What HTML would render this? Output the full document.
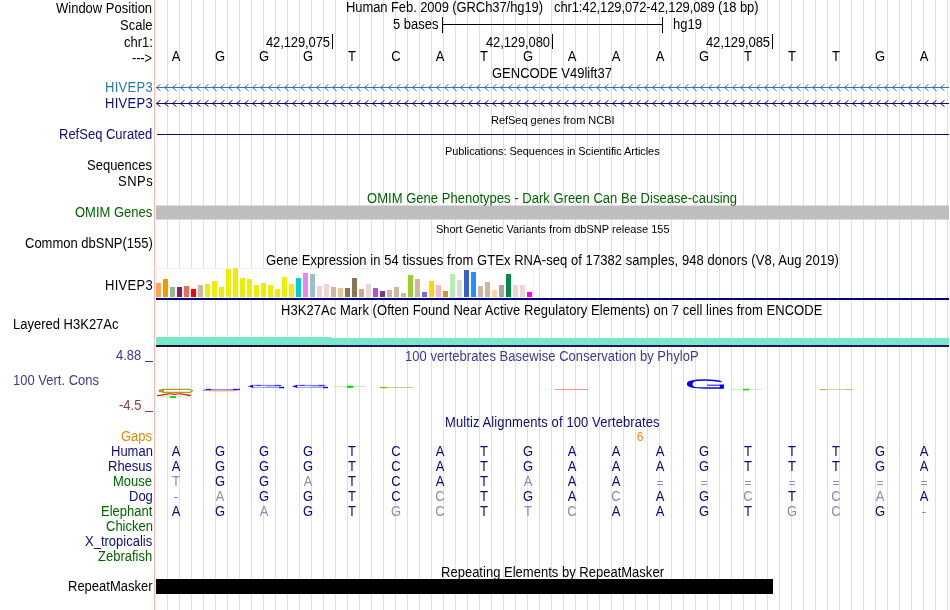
<!DOCTYPE html>
<html><head><meta charset="utf-8"><style>
html,body{margin:0;padding:0;background:#fff;}
#c{position:relative;width:950px;height:610px;overflow:hidden;background:#fff;font-family:"Liberation Sans",sans-serif;}
.t{position:absolute;white-space:pre;line-height:15px;transform:scaleY(1.07);will-change:transform;}
.r{position:absolute;}
</style></head><body><div id="c">
<div class="r" style="left:167px;top:0px;width:1px;height:610px;background:#dcdcff;"></div>
<div class="r" style="left:179px;top:0px;width:1px;height:610px;background:#dcdcff;"></div>
<div class="r" style="left:191px;top:0px;width:1px;height:610px;background:#dcdcff;"></div>
<div class="r" style="left:203px;top:0px;width:1px;height:610px;background:#dcdcff;"></div>
<div class="r" style="left:215px;top:0px;width:1px;height:610px;background:#dcdcff;"></div>
<div class="r" style="left:227px;top:0px;width:1px;height:610px;background:#dcdcff;"></div>
<div class="r" style="left:239px;top:0px;width:1px;height:610px;background:#dcdcff;"></div>
<div class="r" style="left:251px;top:0px;width:1px;height:610px;background:#dcdcff;"></div>
<div class="r" style="left:263px;top:0px;width:1px;height:610px;background:#dcdcff;"></div>
<div class="r" style="left:275px;top:0px;width:1px;height:610px;background:#dcdcff;"></div>
<div class="r" style="left:287px;top:0px;width:1px;height:610px;background:#dcdcff;"></div>
<div class="r" style="left:299px;top:0px;width:1px;height:610px;background:#dcdcff;"></div>
<div class="r" style="left:311px;top:0px;width:1px;height:610px;background:#dcdcff;"></div>
<div class="r" style="left:323px;top:0px;width:1px;height:610px;background:#dcdcff;"></div>
<div class="r" style="left:335px;top:0px;width:1px;height:610px;background:#dcdcff;"></div>
<div class="r" style="left:347px;top:0px;width:1px;height:610px;background:#dcdcff;"></div>
<div class="r" style="left:359px;top:0px;width:1px;height:610px;background:#dcdcff;"></div>
<div class="r" style="left:371px;top:0px;width:1px;height:610px;background:#dcdcff;"></div>
<div class="r" style="left:383px;top:0px;width:1px;height:610px;background:#dcdcff;"></div>
<div class="r" style="left:395px;top:0px;width:1px;height:610px;background:#dcdcff;"></div>
<div class="r" style="left:407px;top:0px;width:1px;height:610px;background:#dcdcff;"></div>
<div class="r" style="left:419px;top:0px;width:1px;height:610px;background:#dcdcff;"></div>
<div class="r" style="left:431px;top:0px;width:1px;height:610px;background:#dcdcff;"></div>
<div class="r" style="left:443px;top:0px;width:1px;height:610px;background:#dcdcff;"></div>
<div class="r" style="left:455px;top:0px;width:1px;height:610px;background:#dcdcff;"></div>
<div class="r" style="left:467px;top:0px;width:1px;height:610px;background:#dcdcff;"></div>
<div class="r" style="left:479px;top:0px;width:1px;height:610px;background:#dcdcff;"></div>
<div class="r" style="left:491px;top:0px;width:1px;height:610px;background:#dcdcff;"></div>
<div class="r" style="left:503px;top:0px;width:1px;height:610px;background:#dcdcff;"></div>
<div class="r" style="left:515px;top:0px;width:1px;height:610px;background:#dcdcff;"></div>
<div class="r" style="left:527px;top:0px;width:1px;height:610px;background:#dcdcff;"></div>
<div class="r" style="left:539px;top:0px;width:1px;height:610px;background:#dcdcff;"></div>
<div class="r" style="left:551px;top:0px;width:1px;height:610px;background:#dcdcff;"></div>
<div class="r" style="left:563px;top:0px;width:1px;height:610px;background:#dcdcff;"></div>
<div class="r" style="left:575px;top:0px;width:1px;height:610px;background:#dcdcff;"></div>
<div class="r" style="left:587px;top:0px;width:1px;height:610px;background:#dcdcff;"></div>
<div class="r" style="left:599px;top:0px;width:1px;height:610px;background:#dcdcff;"></div>
<div class="r" style="left:611px;top:0px;width:1px;height:610px;background:#dcdcff;"></div>
<div class="r" style="left:623px;top:0px;width:1px;height:610px;background:#dcdcff;"></div>
<div class="r" style="left:635px;top:0px;width:1px;height:610px;background:#dcdcff;"></div>
<div class="r" style="left:647px;top:0px;width:1px;height:610px;background:#dcdcff;"></div>
<div class="r" style="left:659px;top:0px;width:1px;height:610px;background:#dcdcff;"></div>
<div class="r" style="left:671px;top:0px;width:1px;height:610px;background:#dcdcff;"></div>
<div class="r" style="left:683px;top:0px;width:1px;height:610px;background:#dcdcff;"></div>
<div class="r" style="left:695px;top:0px;width:1px;height:610px;background:#dcdcff;"></div>
<div class="r" style="left:707px;top:0px;width:1px;height:610px;background:#dcdcff;"></div>
<div class="r" style="left:719px;top:0px;width:1px;height:610px;background:#dcdcff;"></div>
<div class="r" style="left:731px;top:0px;width:1px;height:610px;background:#dcdcff;"></div>
<div class="r" style="left:743px;top:0px;width:1px;height:610px;background:#dcdcff;"></div>
<div class="r" style="left:755px;top:0px;width:1px;height:610px;background:#dcdcff;"></div>
<div class="r" style="left:767px;top:0px;width:1px;height:610px;background:#dcdcff;"></div>
<div class="r" style="left:779px;top:0px;width:1px;height:610px;background:#dcdcff;"></div>
<div class="r" style="left:791px;top:0px;width:1px;height:610px;background:#dcdcff;"></div>
<div class="r" style="left:803px;top:0px;width:1px;height:610px;background:#dcdcff;"></div>
<div class="r" style="left:815px;top:0px;width:1px;height:610px;background:#dcdcff;"></div>
<div class="r" style="left:827px;top:0px;width:1px;height:610px;background:#dcdcff;"></div>
<div class="r" style="left:839px;top:0px;width:1px;height:610px;background:#dcdcff;"></div>
<div class="r" style="left:851px;top:0px;width:1px;height:610px;background:#dcdcff;"></div>
<div class="r" style="left:863px;top:0px;width:1px;height:610px;background:#dcdcff;"></div>
<div class="r" style="left:875px;top:0px;width:1px;height:610px;background:#dcdcff;"></div>
<div class="r" style="left:887px;top:0px;width:1px;height:610px;background:#dcdcff;"></div>
<div class="r" style="left:899px;top:0px;width:1px;height:610px;background:#dcdcff;"></div>
<div class="r" style="left:911px;top:0px;width:1px;height:610px;background:#dcdcff;"></div>
<div class="r" style="left:923px;top:0px;width:1px;height:610px;background:#dcdcff;"></div>
<div class="r" style="left:935px;top:0px;width:1px;height:610px;background:#dcdcff;"></div>
<div class="r" style="left:947px;top:0px;width:1px;height:610px;background:#dcdcff;"></div>
<div class="r" style="left:154px;top:0px;width:1px;height:610px;background:#ffb4b4;"></div>
<div class="t" style="right:797.5px;top:1.0px;font-size:13px;color:#000;transform-origin:0 12.0px;">Window Position</div>
<div class="t" style="right:797.5px;top:18.0px;font-size:13px;color:#000;transform-origin:0 12.0px;">Scale</div>
<div class="t" style="right:797.5px;top:35.0px;font-size:13px;color:#000;transform-origin:0 12.0px;">chr1:</div>
<div class="t" style="right:798.3px;top:51.0px;font-size:13px;color:#000;transform-origin:0 12.0px;letter-spacing:-0.2px;">---&gt;</div>
<div class="t" style="right:797.2px;top:80.0px;font-size:13px;color:#2676b6;transform-origin:0 12.0px;letter-spacing:0.3px;">HIVEP3</div>
<div class="t" style="right:797.2px;top:96.0px;font-size:13px;color:#0c0c78;transform-origin:0 12.0px;letter-spacing:0.3px;">HIVEP3</div>
<div class="t" style="right:797.5px;top:127.0px;font-size:13px;color:#0c0c78;transform-origin:0 12.0px;">RefSeq Curated</div>
<div class="t" style="right:797.5px;top:158.0px;font-size:13px;color:#000;transform-origin:0 12.0px;">Sequences</div>
<div class="t" style="right:797.0px;top:174.0px;font-size:13px;color:#000;transform-origin:0 12.0px;letter-spacing:0.5px;">SNPs</div>
<div class="t" style="right:797.5px;top:205.0px;font-size:13px;color:#006400;transform-origin:0 12.0px;">OMIM Genes</div>
<div class="t" style="right:797.5px;top:236.0px;font-size:13px;color:#000;transform-origin:0 12.0px;">Common dbSNP(155)</div>
<div class="t" style="right:797.2px;top:278.0px;font-size:13px;color:#000;transform-origin:0 12.0px;letter-spacing:0.3px;">HIVEP3</div>
<div class="t" style="left:13px;top:317.0px;font-size:13px;color:#000;transform-origin:0 12.0px;">Layered H3K27Ac</div>
<div class="t" style="right:809px;top:348.0px;font-size:13px;color:#3c3c8c;transform-origin:0 12.0px;">4.88</div>
<div class="r" style="left:145px;top:361px;width:8px;height:1px;background:#3c3c8c;"></div>
<div class="t" style="left:13px;top:373.0px;font-size:13px;color:#3c3c8c;transform-origin:0 12.0px;">100 Vert. Cons</div>
<div class="t" style="right:809px;top:398.0px;font-size:13px;color:#8c3c3c;transform-origin:0 12.0px;">-4.5</div>
<div class="r" style="left:145px;top:411px;width:8px;height:1px;background:#8c3c3c;"></div>
<div class="t" style="right:797.5px;top:429.0px;font-size:13px;color:#e88a00;transform-origin:0 12.0px;">Gaps</div>
<div class="t" style="right:797.5px;top:444.0px;font-size:13px;color:#0c0c78;transform-origin:0 12.0px;">Human</div>
<div class="t" style="right:797.5px;top:459.0px;font-size:13px;color:#0c0c78;transform-origin:0 12.0px;">Rhesus</div>
<div class="t" style="right:797.5px;top:474.0px;font-size:13px;color:#006400;transform-origin:0 12.0px;">Mouse</div>
<div class="t" style="right:797.5px;top:489.0px;font-size:13px;color:#0c0c78;transform-origin:0 12.0px;">Dog</div>
<div class="t" style="right:797.5px;top:504.0px;font-size:13px;color:#006400;transform-origin:0 12.0px;">Elephant</div>
<div class="t" style="right:797.5px;top:519.0px;font-size:13px;color:#006400;transform-origin:0 12.0px;">Chicken</div>
<div class="t" style="right:797.5px;top:534.0px;font-size:13px;color:#0c0c78;transform-origin:0 12.0px;">X_tropicalis</div>
<div class="t" style="right:797.5px;top:549.0px;font-size:13px;color:#006400;transform-origin:0 12.0px;">Zebrafish</div>
<div class="t" style="right:797.5px;top:579.0px;font-size:13px;color:#000;transform-origin:0 12.0px;">RepeatMasker</div>
<div class="t" style="left:345.6px;top:0.0px;font-size:13px;color:#000;transform-origin:0 12.0px;letter-spacing:-0.086px;">Human Feb. 2009 (GRCh37/hg19)</div>
<div class="t" style="left:554.1px;top:0.0px;font-size:13px;color:#000;transform-origin:0 12.0px;letter-spacing:-0.109px;">chr1:42,129,072-42,129,089 (18 bp)</div>
<div class="t" style="left:393px;top:17.0px;font-size:13px;color:#000;transform-origin:0 12.0px;">5 bases</div>
<div class="r" style="left:442px;top:17px;width:1px;height:16px;background:#000;"></div>
<div class="r" style="left:662px;top:17px;width:1px;height:16px;background:#000;"></div>
<div class="r" style="left:442px;top:24px;width:221px;height:1px;background:#000;"></div>
<div class="t" style="left:673px;top:17.0px;font-size:13px;color:#000;transform-origin:0 12.0px;">hg19</div>
<div class="t" style="right:620px;top:35.0px;font-size:13px;color:#000;transform-origin:0 12.0px;letter-spacing:-0.12px;">42,129,075</div>
<div class="r" style="left:332px;top:34px;width:1px;height:15px;background:#000;"></div>
<div class="t" style="right:400px;top:35.0px;font-size:13px;color:#000;transform-origin:0 12.0px;letter-spacing:-0.12px;">42,129,080</div>
<div class="r" style="left:552px;top:34px;width:1px;height:15px;background:#000;"></div>
<div class="t" style="right:180px;top:35.0px;font-size:13px;color:#000;transform-origin:0 12.0px;letter-spacing:-0.12px;">42,129,085</div>
<div class="r" style="left:772px;top:34px;width:1px;height:15px;background:#000;"></div>
<div class="t" style="left:-224px;width:800px;text-align:center;top:49.0px;font-size:13px;color:#000;transform-origin:0 12.0px;">A</div>
<div class="t" style="left:-180px;width:800px;text-align:center;top:49.0px;font-size:13px;color:#000;transform-origin:0 12.0px;">G</div>
<div class="t" style="left:-136px;width:800px;text-align:center;top:49.0px;font-size:13px;color:#000;transform-origin:0 12.0px;">G</div>
<div class="t" style="left:-92px;width:800px;text-align:center;top:49.0px;font-size:13px;color:#000;transform-origin:0 12.0px;">G</div>
<div class="t" style="left:-48px;width:800px;text-align:center;top:49.0px;font-size:13px;color:#000;transform-origin:0 12.0px;">T</div>
<div class="t" style="left:-4px;width:800px;text-align:center;top:49.0px;font-size:13px;color:#000;transform-origin:0 12.0px;">C</div>
<div class="t" style="left:40px;width:800px;text-align:center;top:49.0px;font-size:13px;color:#000;transform-origin:0 12.0px;">A</div>
<div class="t" style="left:84px;width:800px;text-align:center;top:49.0px;font-size:13px;color:#000;transform-origin:0 12.0px;">T</div>
<div class="t" style="left:128px;width:800px;text-align:center;top:49.0px;font-size:13px;color:#000;transform-origin:0 12.0px;">G</div>
<div class="t" style="left:172px;width:800px;text-align:center;top:49.0px;font-size:13px;color:#000;transform-origin:0 12.0px;">A</div>
<div class="t" style="left:216px;width:800px;text-align:center;top:49.0px;font-size:13px;color:#000;transform-origin:0 12.0px;">A</div>
<div class="t" style="left:260px;width:800px;text-align:center;top:49.0px;font-size:13px;color:#000;transform-origin:0 12.0px;">A</div>
<div class="t" style="left:304px;width:800px;text-align:center;top:49.0px;font-size:13px;color:#000;transform-origin:0 12.0px;">G</div>
<div class="t" style="left:348px;width:800px;text-align:center;top:49.0px;font-size:13px;color:#000;transform-origin:0 12.0px;">T</div>
<div class="t" style="left:392px;width:800px;text-align:center;top:49.0px;font-size:13px;color:#000;transform-origin:0 12.0px;">T</div>
<div class="t" style="left:436px;width:800px;text-align:center;top:49.0px;font-size:13px;color:#000;transform-origin:0 12.0px;">T</div>
<div class="t" style="left:480px;width:800px;text-align:center;top:49.0px;font-size:13px;color:#000;transform-origin:0 12.0px;">G</div>
<div class="t" style="left:524px;width:800px;text-align:center;top:49.0px;font-size:13px;color:#000;transform-origin:0 12.0px;">A</div>
<div class="t" style="left:491.5px;top:66.0px;font-size:13px;color:#000;transform-origin:0 12.0px;letter-spacing:0.0px;">GENCODE V49lift37</div>
<div class="t" style="left:490.8px;top:113.0px;font-size:11px;color:#000;transform-origin:0 10.0px;letter-spacing:-0.029px;">RefSeq genes from NCBI</div>
<div class="t" style="left:444.5px;top:144.0px;font-size:11px;color:#000;transform-origin:0 10.0px;letter-spacing:-0.067px;">Publications: Sequences in Scientific Articles</div>
<div class="t" style="left:367.4px;top:191.0px;font-size:13px;color:#006400;transform-origin:0 12.0px;letter-spacing:0.029px;">OMIM Gene Phenotypes - Dark Green Can Be Disease-causing</div>
<div class="t" style="left:435.6px;top:222.0px;font-size:11px;color:#000;transform-origin:0 10.0px;letter-spacing:0.009px;">Short Genetic Variants from dbSNP release 155</div>
<div class="t" style="left:265.6px;top:253.0px;font-size:13px;color:#000;transform-origin:0 12.0px;letter-spacing:0.062px;">Gene Expression in 54 tissues from GTEx RNA-seq of 17382 samples, 948 donors (V8, Aug 2019)</div>
<div class="t" style="left:280.8px;top:303.0px;font-size:13px;color:#000;transform-origin:0 12.0px;letter-spacing:0.045px;">H3K27Ac Mark (Often Found Near Active Regulatory Elements) on 7 cell lines from ENCODE</div>
<div class="t" style="left:404.7px;top:349.0px;font-size:13px;color:#3c3c8c;transform-origin:0 12.0px;letter-spacing:0.039px;">100 vertebrates Basewise Conservation by PhyloP</div>
<div class="t" style="left:444.5px;top:415.0px;font-size:13px;color:#0c0c78;transform-origin:0 12.0px;letter-spacing:0.103px;">Multiz Alignments of 100 Vertebrates</div>
<div class="t" style="left:440.8px;top:565.0px;font-size:13px;color:#000;transform-origin:0 12.0px;letter-spacing:0.012px;">Repeating Elements by RepeatMasker</div>
<div class="r" style="left:156px;top:87px;width:793px;height:1px;background:#2676b6;"></div>
<svg class="r" style="left:0;top:83px" width="949" height="9"><polyline points="160.5,1.3 156.5,4.5 160.5,7.7" fill="none" stroke="#2676b6" stroke-width="1"/><polyline points="168.5,1.3 164.5,4.5 168.5,7.7" fill="none" stroke="#2676b6" stroke-width="1"/><polyline points="176.5,1.3 172.5,4.5 176.5,7.7" fill="none" stroke="#2676b6" stroke-width="1"/><polyline points="184.5,1.3 180.5,4.5 184.5,7.7" fill="none" stroke="#2676b6" stroke-width="1"/><polyline points="192.5,1.3 188.5,4.5 192.5,7.7" fill="none" stroke="#2676b6" stroke-width="1"/><polyline points="200.5,1.3 196.5,4.5 200.5,7.7" fill="none" stroke="#2676b6" stroke-width="1"/><polyline points="208.5,1.3 204.5,4.5 208.5,7.7" fill="none" stroke="#2676b6" stroke-width="1"/><polyline points="216.5,1.3 212.5,4.5 216.5,7.7" fill="none" stroke="#2676b6" stroke-width="1"/><polyline points="224.5,1.3 220.5,4.5 224.5,7.7" fill="none" stroke="#2676b6" stroke-width="1"/><polyline points="232.5,1.3 228.5,4.5 232.5,7.7" fill="none" stroke="#2676b6" stroke-width="1"/><polyline points="240.5,1.3 236.5,4.5 240.5,7.7" fill="none" stroke="#2676b6" stroke-width="1"/><polyline points="248.5,1.3 244.5,4.5 248.5,7.7" fill="none" stroke="#2676b6" stroke-width="1"/><polyline points="256.5,1.3 252.5,4.5 256.5,7.7" fill="none" stroke="#2676b6" stroke-width="1"/><polyline points="264.5,1.3 260.5,4.5 264.5,7.7" fill="none" stroke="#2676b6" stroke-width="1"/><polyline points="272.5,1.3 268.5,4.5 272.5,7.7" fill="none" stroke="#2676b6" stroke-width="1"/><polyline points="280.5,1.3 276.5,4.5 280.5,7.7" fill="none" stroke="#2676b6" stroke-width="1"/><polyline points="288.5,1.3 284.5,4.5 288.5,7.7" fill="none" stroke="#2676b6" stroke-width="1"/><polyline points="296.5,1.3 292.5,4.5 296.5,7.7" fill="none" stroke="#2676b6" stroke-width="1"/><polyline points="304.5,1.3 300.5,4.5 304.5,7.7" fill="none" stroke="#2676b6" stroke-width="1"/><polyline points="312.5,1.3 308.5,4.5 312.5,7.7" fill="none" stroke="#2676b6" stroke-width="1"/><polyline points="320.5,1.3 316.5,4.5 320.5,7.7" fill="none" stroke="#2676b6" stroke-width="1"/><polyline points="328.5,1.3 324.5,4.5 328.5,7.7" fill="none" stroke="#2676b6" stroke-width="1"/><polyline points="336.5,1.3 332.5,4.5 336.5,7.7" fill="none" stroke="#2676b6" stroke-width="1"/><polyline points="344.5,1.3 340.5,4.5 344.5,7.7" fill="none" stroke="#2676b6" stroke-width="1"/><polyline points="352.5,1.3 348.5,4.5 352.5,7.7" fill="none" stroke="#2676b6" stroke-width="1"/><polyline points="360.5,1.3 356.5,4.5 360.5,7.7" fill="none" stroke="#2676b6" stroke-width="1"/><polyline points="368.5,1.3 364.5,4.5 368.5,7.7" fill="none" stroke="#2676b6" stroke-width="1"/><polyline points="376.5,1.3 372.5,4.5 376.5,7.7" fill="none" stroke="#2676b6" stroke-width="1"/><polyline points="384.5,1.3 380.5,4.5 384.5,7.7" fill="none" stroke="#2676b6" stroke-width="1"/><polyline points="392.5,1.3 388.5,4.5 392.5,7.7" fill="none" stroke="#2676b6" stroke-width="1"/><polyline points="400.5,1.3 396.5,4.5 400.5,7.7" fill="none" stroke="#2676b6" stroke-width="1"/><polyline points="408.5,1.3 404.5,4.5 408.5,7.7" fill="none" stroke="#2676b6" stroke-width="1"/><polyline points="416.5,1.3 412.5,4.5 416.5,7.7" fill="none" stroke="#2676b6" stroke-width="1"/><polyline points="424.5,1.3 420.5,4.5 424.5,7.7" fill="none" stroke="#2676b6" stroke-width="1"/><polyline points="432.5,1.3 428.5,4.5 432.5,7.7" fill="none" stroke="#2676b6" stroke-width="1"/><polyline points="440.5,1.3 436.5,4.5 440.5,7.7" fill="none" stroke="#2676b6" stroke-width="1"/><polyline points="448.5,1.3 444.5,4.5 448.5,7.7" fill="none" stroke="#2676b6" stroke-width="1"/><polyline points="456.5,1.3 452.5,4.5 456.5,7.7" fill="none" stroke="#2676b6" stroke-width="1"/><polyline points="464.5,1.3 460.5,4.5 464.5,7.7" fill="none" stroke="#2676b6" stroke-width="1"/><polyline points="472.5,1.3 468.5,4.5 472.5,7.7" fill="none" stroke="#2676b6" stroke-width="1"/><polyline points="480.5,1.3 476.5,4.5 480.5,7.7" fill="none" stroke="#2676b6" stroke-width="1"/><polyline points="488.5,1.3 484.5,4.5 488.5,7.7" fill="none" stroke="#2676b6" stroke-width="1"/><polyline points="496.5,1.3 492.5,4.5 496.5,7.7" fill="none" stroke="#2676b6" stroke-width="1"/><polyline points="504.5,1.3 500.5,4.5 504.5,7.7" fill="none" stroke="#2676b6" stroke-width="1"/><polyline points="512.5,1.3 508.5,4.5 512.5,7.7" fill="none" stroke="#2676b6" stroke-width="1"/><polyline points="520.5,1.3 516.5,4.5 520.5,7.7" fill="none" stroke="#2676b6" stroke-width="1"/><polyline points="528.5,1.3 524.5,4.5 528.5,7.7" fill="none" stroke="#2676b6" stroke-width="1"/><polyline points="536.5,1.3 532.5,4.5 536.5,7.7" fill="none" stroke="#2676b6" stroke-width="1"/><polyline points="544.5,1.3 540.5,4.5 544.5,7.7" fill="none" stroke="#2676b6" stroke-width="1"/><polyline points="552.5,1.3 548.5,4.5 552.5,7.7" fill="none" stroke="#2676b6" stroke-width="1"/><polyline points="560.5,1.3 556.5,4.5 560.5,7.7" fill="none" stroke="#2676b6" stroke-width="1"/><polyline points="568.5,1.3 564.5,4.5 568.5,7.7" fill="none" stroke="#2676b6" stroke-width="1"/><polyline points="576.5,1.3 572.5,4.5 576.5,7.7" fill="none" stroke="#2676b6" stroke-width="1"/><polyline points="584.5,1.3 580.5,4.5 584.5,7.7" fill="none" stroke="#2676b6" stroke-width="1"/><polyline points="592.5,1.3 588.5,4.5 592.5,7.7" fill="none" stroke="#2676b6" stroke-width="1"/><polyline points="600.5,1.3 596.5,4.5 600.5,7.7" fill="none" stroke="#2676b6" stroke-width="1"/><polyline points="608.5,1.3 604.5,4.5 608.5,7.7" fill="none" stroke="#2676b6" stroke-width="1"/><polyline points="616.5,1.3 612.5,4.5 616.5,7.7" fill="none" stroke="#2676b6" stroke-width="1"/><polyline points="624.5,1.3 620.5,4.5 624.5,7.7" fill="none" stroke="#2676b6" stroke-width="1"/><polyline points="632.5,1.3 628.5,4.5 632.5,7.7" fill="none" stroke="#2676b6" stroke-width="1"/><polyline points="640.5,1.3 636.5,4.5 640.5,7.7" fill="none" stroke="#2676b6" stroke-width="1"/><polyline points="648.5,1.3 644.5,4.5 648.5,7.7" fill="none" stroke="#2676b6" stroke-width="1"/><polyline points="656.5,1.3 652.5,4.5 656.5,7.7" fill="none" stroke="#2676b6" stroke-width="1"/><polyline points="664.5,1.3 660.5,4.5 664.5,7.7" fill="none" stroke="#2676b6" stroke-width="1"/><polyline points="672.5,1.3 668.5,4.5 672.5,7.7" fill="none" stroke="#2676b6" stroke-width="1"/><polyline points="680.5,1.3 676.5,4.5 680.5,7.7" fill="none" stroke="#2676b6" stroke-width="1"/><polyline points="688.5,1.3 684.5,4.5 688.5,7.7" fill="none" stroke="#2676b6" stroke-width="1"/><polyline points="696.5,1.3 692.5,4.5 696.5,7.7" fill="none" stroke="#2676b6" stroke-width="1"/><polyline points="704.5,1.3 700.5,4.5 704.5,7.7" fill="none" stroke="#2676b6" stroke-width="1"/><polyline points="712.5,1.3 708.5,4.5 712.5,7.7" fill="none" stroke="#2676b6" stroke-width="1"/><polyline points="720.5,1.3 716.5,4.5 720.5,7.7" fill="none" stroke="#2676b6" stroke-width="1"/><polyline points="728.5,1.3 724.5,4.5 728.5,7.7" fill="none" stroke="#2676b6" stroke-width="1"/><polyline points="736.5,1.3 732.5,4.5 736.5,7.7" fill="none" stroke="#2676b6" stroke-width="1"/><polyline points="744.5,1.3 740.5,4.5 744.5,7.7" fill="none" stroke="#2676b6" stroke-width="1"/><polyline points="752.5,1.3 748.5,4.5 752.5,7.7" fill="none" stroke="#2676b6" stroke-width="1"/><polyline points="760.5,1.3 756.5,4.5 760.5,7.7" fill="none" stroke="#2676b6" stroke-width="1"/><polyline points="768.5,1.3 764.5,4.5 768.5,7.7" fill="none" stroke="#2676b6" stroke-width="1"/><polyline points="776.5,1.3 772.5,4.5 776.5,7.7" fill="none" stroke="#2676b6" stroke-width="1"/><polyline points="784.5,1.3 780.5,4.5 784.5,7.7" fill="none" stroke="#2676b6" stroke-width="1"/><polyline points="792.5,1.3 788.5,4.5 792.5,7.7" fill="none" stroke="#2676b6" stroke-width="1"/><polyline points="800.5,1.3 796.5,4.5 800.5,7.7" fill="none" stroke="#2676b6" stroke-width="1"/><polyline points="808.5,1.3 804.5,4.5 808.5,7.7" fill="none" stroke="#2676b6" stroke-width="1"/><polyline points="816.5,1.3 812.5,4.5 816.5,7.7" fill="none" stroke="#2676b6" stroke-width="1"/><polyline points="824.5,1.3 820.5,4.5 824.5,7.7" fill="none" stroke="#2676b6" stroke-width="1"/><polyline points="832.5,1.3 828.5,4.5 832.5,7.7" fill="none" stroke="#2676b6" stroke-width="1"/><polyline points="840.5,1.3 836.5,4.5 840.5,7.7" fill="none" stroke="#2676b6" stroke-width="1"/><polyline points="848.5,1.3 844.5,4.5 848.5,7.7" fill="none" stroke="#2676b6" stroke-width="1"/><polyline points="856.5,1.3 852.5,4.5 856.5,7.7" fill="none" stroke="#2676b6" stroke-width="1"/><polyline points="864.5,1.3 860.5,4.5 864.5,7.7" fill="none" stroke="#2676b6" stroke-width="1"/><polyline points="872.5,1.3 868.5,4.5 872.5,7.7" fill="none" stroke="#2676b6" stroke-width="1"/><polyline points="880.5,1.3 876.5,4.5 880.5,7.7" fill="none" stroke="#2676b6" stroke-width="1"/><polyline points="888.5,1.3 884.5,4.5 888.5,7.7" fill="none" stroke="#2676b6" stroke-width="1"/><polyline points="896.5,1.3 892.5,4.5 896.5,7.7" fill="none" stroke="#2676b6" stroke-width="1"/><polyline points="904.5,1.3 900.5,4.5 904.5,7.7" fill="none" stroke="#2676b6" stroke-width="1"/><polyline points="912.5,1.3 908.5,4.5 912.5,7.7" fill="none" stroke="#2676b6" stroke-width="1"/><polyline points="920.5,1.3 916.5,4.5 920.5,7.7" fill="none" stroke="#2676b6" stroke-width="1"/><polyline points="928.5,1.3 924.5,4.5 928.5,7.7" fill="none" stroke="#2676b6" stroke-width="1"/><polyline points="936.5,1.3 932.5,4.5 936.5,7.7" fill="none" stroke="#2676b6" stroke-width="1"/><polyline points="944.5,1.3 940.5,4.5 944.5,7.7" fill="none" stroke="#2676b6" stroke-width="1"/><polyline points="952.5,1.3 948.5,4.5 952.5,7.7" fill="none" stroke="#2676b6" stroke-width="1"/></svg>
<div class="r" style="left:156px;top:103px;width:793px;height:1px;background:#0c0c78;"></div>
<svg class="r" style="left:0;top:99px" width="949" height="9"><polyline points="160.5,1.3 156.5,4.5 160.5,7.7" fill="none" stroke="#0c0c78" stroke-width="1"/><polyline points="168.5,1.3 164.5,4.5 168.5,7.7" fill="none" stroke="#0c0c78" stroke-width="1"/><polyline points="176.5,1.3 172.5,4.5 176.5,7.7" fill="none" stroke="#0c0c78" stroke-width="1"/><polyline points="184.5,1.3 180.5,4.5 184.5,7.7" fill="none" stroke="#0c0c78" stroke-width="1"/><polyline points="192.5,1.3 188.5,4.5 192.5,7.7" fill="none" stroke="#0c0c78" stroke-width="1"/><polyline points="200.5,1.3 196.5,4.5 200.5,7.7" fill="none" stroke="#0c0c78" stroke-width="1"/><polyline points="208.5,1.3 204.5,4.5 208.5,7.7" fill="none" stroke="#0c0c78" stroke-width="1"/><polyline points="216.5,1.3 212.5,4.5 216.5,7.7" fill="none" stroke="#0c0c78" stroke-width="1"/><polyline points="224.5,1.3 220.5,4.5 224.5,7.7" fill="none" stroke="#0c0c78" stroke-width="1"/><polyline points="232.5,1.3 228.5,4.5 232.5,7.7" fill="none" stroke="#0c0c78" stroke-width="1"/><polyline points="240.5,1.3 236.5,4.5 240.5,7.7" fill="none" stroke="#0c0c78" stroke-width="1"/><polyline points="248.5,1.3 244.5,4.5 248.5,7.7" fill="none" stroke="#0c0c78" stroke-width="1"/><polyline points="256.5,1.3 252.5,4.5 256.5,7.7" fill="none" stroke="#0c0c78" stroke-width="1"/><polyline points="264.5,1.3 260.5,4.5 264.5,7.7" fill="none" stroke="#0c0c78" stroke-width="1"/><polyline points="272.5,1.3 268.5,4.5 272.5,7.7" fill="none" stroke="#0c0c78" stroke-width="1"/><polyline points="280.5,1.3 276.5,4.5 280.5,7.7" fill="none" stroke="#0c0c78" stroke-width="1"/><polyline points="288.5,1.3 284.5,4.5 288.5,7.7" fill="none" stroke="#0c0c78" stroke-width="1"/><polyline points="296.5,1.3 292.5,4.5 296.5,7.7" fill="none" stroke="#0c0c78" stroke-width="1"/><polyline points="304.5,1.3 300.5,4.5 304.5,7.7" fill="none" stroke="#0c0c78" stroke-width="1"/><polyline points="312.5,1.3 308.5,4.5 312.5,7.7" fill="none" stroke="#0c0c78" stroke-width="1"/><polyline points="320.5,1.3 316.5,4.5 320.5,7.7" fill="none" stroke="#0c0c78" stroke-width="1"/><polyline points="328.5,1.3 324.5,4.5 328.5,7.7" fill="none" stroke="#0c0c78" stroke-width="1"/><polyline points="336.5,1.3 332.5,4.5 336.5,7.7" fill="none" stroke="#0c0c78" stroke-width="1"/><polyline points="344.5,1.3 340.5,4.5 344.5,7.7" fill="none" stroke="#0c0c78" stroke-width="1"/><polyline points="352.5,1.3 348.5,4.5 352.5,7.7" fill="none" stroke="#0c0c78" stroke-width="1"/><polyline points="360.5,1.3 356.5,4.5 360.5,7.7" fill="none" stroke="#0c0c78" stroke-width="1"/><polyline points="368.5,1.3 364.5,4.5 368.5,7.7" fill="none" stroke="#0c0c78" stroke-width="1"/><polyline points="376.5,1.3 372.5,4.5 376.5,7.7" fill="none" stroke="#0c0c78" stroke-width="1"/><polyline points="384.5,1.3 380.5,4.5 384.5,7.7" fill="none" stroke="#0c0c78" stroke-width="1"/><polyline points="392.5,1.3 388.5,4.5 392.5,7.7" fill="none" stroke="#0c0c78" stroke-width="1"/><polyline points="400.5,1.3 396.5,4.5 400.5,7.7" fill="none" stroke="#0c0c78" stroke-width="1"/><polyline points="408.5,1.3 404.5,4.5 408.5,7.7" fill="none" stroke="#0c0c78" stroke-width="1"/><polyline points="416.5,1.3 412.5,4.5 416.5,7.7" fill="none" stroke="#0c0c78" stroke-width="1"/><polyline points="424.5,1.3 420.5,4.5 424.5,7.7" fill="none" stroke="#0c0c78" stroke-width="1"/><polyline points="432.5,1.3 428.5,4.5 432.5,7.7" fill="none" stroke="#0c0c78" stroke-width="1"/><polyline points="440.5,1.3 436.5,4.5 440.5,7.7" fill="none" stroke="#0c0c78" stroke-width="1"/><polyline points="448.5,1.3 444.5,4.5 448.5,7.7" fill="none" stroke="#0c0c78" stroke-width="1"/><polyline points="456.5,1.3 452.5,4.5 456.5,7.7" fill="none" stroke="#0c0c78" stroke-width="1"/><polyline points="464.5,1.3 460.5,4.5 464.5,7.7" fill="none" stroke="#0c0c78" stroke-width="1"/><polyline points="472.5,1.3 468.5,4.5 472.5,7.7" fill="none" stroke="#0c0c78" stroke-width="1"/><polyline points="480.5,1.3 476.5,4.5 480.5,7.7" fill="none" stroke="#0c0c78" stroke-width="1"/><polyline points="488.5,1.3 484.5,4.5 488.5,7.7" fill="none" stroke="#0c0c78" stroke-width="1"/><polyline points="496.5,1.3 492.5,4.5 496.5,7.7" fill="none" stroke="#0c0c78" stroke-width="1"/><polyline points="504.5,1.3 500.5,4.5 504.5,7.7" fill="none" stroke="#0c0c78" stroke-width="1"/><polyline points="512.5,1.3 508.5,4.5 512.5,7.7" fill="none" stroke="#0c0c78" stroke-width="1"/><polyline points="520.5,1.3 516.5,4.5 520.5,7.7" fill="none" stroke="#0c0c78" stroke-width="1"/><polyline points="528.5,1.3 524.5,4.5 528.5,7.7" fill="none" stroke="#0c0c78" stroke-width="1"/><polyline points="536.5,1.3 532.5,4.5 536.5,7.7" fill="none" stroke="#0c0c78" stroke-width="1"/><polyline points="544.5,1.3 540.5,4.5 544.5,7.7" fill="none" stroke="#0c0c78" stroke-width="1"/><polyline points="552.5,1.3 548.5,4.5 552.5,7.7" fill="none" stroke="#0c0c78" stroke-width="1"/><polyline points="560.5,1.3 556.5,4.5 560.5,7.7" fill="none" stroke="#0c0c78" stroke-width="1"/><polyline points="568.5,1.3 564.5,4.5 568.5,7.7" fill="none" stroke="#0c0c78" stroke-width="1"/><polyline points="576.5,1.3 572.5,4.5 576.5,7.7" fill="none" stroke="#0c0c78" stroke-width="1"/><polyline points="584.5,1.3 580.5,4.5 584.5,7.7" fill="none" stroke="#0c0c78" stroke-width="1"/><polyline points="592.5,1.3 588.5,4.5 592.5,7.7" fill="none" stroke="#0c0c78" stroke-width="1"/><polyline points="600.5,1.3 596.5,4.5 600.5,7.7" fill="none" stroke="#0c0c78" stroke-width="1"/><polyline points="608.5,1.3 604.5,4.5 608.5,7.7" fill="none" stroke="#0c0c78" stroke-width="1"/><polyline points="616.5,1.3 612.5,4.5 616.5,7.7" fill="none" stroke="#0c0c78" stroke-width="1"/><polyline points="624.5,1.3 620.5,4.5 624.5,7.7" fill="none" stroke="#0c0c78" stroke-width="1"/><polyline points="632.5,1.3 628.5,4.5 632.5,7.7" fill="none" stroke="#0c0c78" stroke-width="1"/><polyline points="640.5,1.3 636.5,4.5 640.5,7.7" fill="none" stroke="#0c0c78" stroke-width="1"/><polyline points="648.5,1.3 644.5,4.5 648.5,7.7" fill="none" stroke="#0c0c78" stroke-width="1"/><polyline points="656.5,1.3 652.5,4.5 656.5,7.7" fill="none" stroke="#0c0c78" stroke-width="1"/><polyline points="664.5,1.3 660.5,4.5 664.5,7.7" fill="none" stroke="#0c0c78" stroke-width="1"/><polyline points="672.5,1.3 668.5,4.5 672.5,7.7" fill="none" stroke="#0c0c78" stroke-width="1"/><polyline points="680.5,1.3 676.5,4.5 680.5,7.7" fill="none" stroke="#0c0c78" stroke-width="1"/><polyline points="688.5,1.3 684.5,4.5 688.5,7.7" fill="none" stroke="#0c0c78" stroke-width="1"/><polyline points="696.5,1.3 692.5,4.5 696.5,7.7" fill="none" stroke="#0c0c78" stroke-width="1"/><polyline points="704.5,1.3 700.5,4.5 704.5,7.7" fill="none" stroke="#0c0c78" stroke-width="1"/><polyline points="712.5,1.3 708.5,4.5 712.5,7.7" fill="none" stroke="#0c0c78" stroke-width="1"/><polyline points="720.5,1.3 716.5,4.5 720.5,7.7" fill="none" stroke="#0c0c78" stroke-width="1"/><polyline points="728.5,1.3 724.5,4.5 728.5,7.7" fill="none" stroke="#0c0c78" stroke-width="1"/><polyline points="736.5,1.3 732.5,4.5 736.5,7.7" fill="none" stroke="#0c0c78" stroke-width="1"/><polyline points="744.5,1.3 740.5,4.5 744.5,7.7" fill="none" stroke="#0c0c78" stroke-width="1"/><polyline points="752.5,1.3 748.5,4.5 752.5,7.7" fill="none" stroke="#0c0c78" stroke-width="1"/><polyline points="760.5,1.3 756.5,4.5 760.5,7.7" fill="none" stroke="#0c0c78" stroke-width="1"/><polyline points="768.5,1.3 764.5,4.5 768.5,7.7" fill="none" stroke="#0c0c78" stroke-width="1"/><polyline points="776.5,1.3 772.5,4.5 776.5,7.7" fill="none" stroke="#0c0c78" stroke-width="1"/><polyline points="784.5,1.3 780.5,4.5 784.5,7.7" fill="none" stroke="#0c0c78" stroke-width="1"/><polyline points="792.5,1.3 788.5,4.5 792.5,7.7" fill="none" stroke="#0c0c78" stroke-width="1"/><polyline points="800.5,1.3 796.5,4.5 800.5,7.7" fill="none" stroke="#0c0c78" stroke-width="1"/><polyline points="808.5,1.3 804.5,4.5 808.5,7.7" fill="none" stroke="#0c0c78" stroke-width="1"/><polyline points="816.5,1.3 812.5,4.5 816.5,7.7" fill="none" stroke="#0c0c78" stroke-width="1"/><polyline points="824.5,1.3 820.5,4.5 824.5,7.7" fill="none" stroke="#0c0c78" stroke-width="1"/><polyline points="832.5,1.3 828.5,4.5 832.5,7.7" fill="none" stroke="#0c0c78" stroke-width="1"/><polyline points="840.5,1.3 836.5,4.5 840.5,7.7" fill="none" stroke="#0c0c78" stroke-width="1"/><polyline points="848.5,1.3 844.5,4.5 848.5,7.7" fill="none" stroke="#0c0c78" stroke-width="1"/><polyline points="856.5,1.3 852.5,4.5 856.5,7.7" fill="none" stroke="#0c0c78" stroke-width="1"/><polyline points="864.5,1.3 860.5,4.5 864.5,7.7" fill="none" stroke="#0c0c78" stroke-width="1"/><polyline points="872.5,1.3 868.5,4.5 872.5,7.7" fill="none" stroke="#0c0c78" stroke-width="1"/><polyline points="880.5,1.3 876.5,4.5 880.5,7.7" fill="none" stroke="#0c0c78" stroke-width="1"/><polyline points="888.5,1.3 884.5,4.5 888.5,7.7" fill="none" stroke="#0c0c78" stroke-width="1"/><polyline points="896.5,1.3 892.5,4.5 896.5,7.7" fill="none" stroke="#0c0c78" stroke-width="1"/><polyline points="904.5,1.3 900.5,4.5 904.5,7.7" fill="none" stroke="#0c0c78" stroke-width="1"/><polyline points="912.5,1.3 908.5,4.5 912.5,7.7" fill="none" stroke="#0c0c78" stroke-width="1"/><polyline points="920.5,1.3 916.5,4.5 920.5,7.7" fill="none" stroke="#0c0c78" stroke-width="1"/><polyline points="928.5,1.3 924.5,4.5 928.5,7.7" fill="none" stroke="#0c0c78" stroke-width="1"/><polyline points="936.5,1.3 932.5,4.5 936.5,7.7" fill="none" stroke="#0c0c78" stroke-width="1"/><polyline points="944.5,1.3 940.5,4.5 944.5,7.7" fill="none" stroke="#0c0c78" stroke-width="1"/><polyline points="952.5,1.3 948.5,4.5 952.5,7.7" fill="none" stroke="#0c0c78" stroke-width="1"/></svg>
<div class="r" style="left:157px;top:134px;width:792px;height:1px;background:#0c0c78;"></div>
<svg class="r" style="left:0;top:195px" width="950" height="35"><rect x="156" y="10.5" width="793" height="14.1" fill="#bebebe"/></svg>
<div class="r" style="left:156px;top:268px;width:378px;height:30px;background:#fff;border:1px solid #f0f0f0;box-sizing:border-box;"></div>
<div class="r" style="left:156px;top:283px;width:5px;height:14px;background:#FFA54F;"></div>
<div class="r" style="left:163px;top:279px;width:5px;height:18px;background:#EE9A00;"></div>
<div class="r" style="left:170px;top:287px;width:5px;height:10px;background:#8FBC8F;"></div>
<div class="r" style="left:177px;top:287px;width:5px;height:10px;background:#8B1C62;"></div>
<div class="r" style="left:184px;top:286px;width:5px;height:11px;background:#EE6A50;"></div>
<div class="r" style="left:191px;top:289px;width:5px;height:8px;background:#FF0000;"></div>
<div class="r" style="left:198px;top:285px;width:5px;height:12px;background:#CDB79E;"></div>
<div class="r" style="left:205px;top:284px;width:5px;height:13px;background:#EEEE00;"></div>
<div class="r" style="left:212px;top:281px;width:5px;height:16px;background:#EEEE00;"></div>
<div class="r" style="left:219px;top:287px;width:5px;height:10px;background:#EEEE00;"></div>
<div class="r" style="left:226px;top:269px;width:5px;height:28px;background:#EEEE00;"></div>
<div class="r" style="left:233px;top:268px;width:5px;height:29px;background:#EEEE00;"></div>
<div class="r" style="left:240px;top:278px;width:5px;height:19px;background:#EEEE00;"></div>
<div class="r" style="left:247px;top:279px;width:5px;height:18px;background:#EEEE00;"></div>
<div class="r" style="left:254px;top:285px;width:5px;height:12px;background:#EEEE00;"></div>
<div class="r" style="left:261px;top:283px;width:5px;height:14px;background:#EEEE00;"></div>
<div class="r" style="left:268px;top:285px;width:5px;height:12px;background:#EEEE00;"></div>
<div class="r" style="left:275px;top:289px;width:5px;height:8px;background:#EEEE00;"></div>
<div class="r" style="left:282px;top:277px;width:5px;height:20px;background:#EEEE00;"></div>
<div class="r" style="left:289px;top:284px;width:5px;height:13px;background:#EEEE00;"></div>
<div class="r" style="left:296px;top:278px;width:5px;height:19px;background:#00CDCD;"></div>
<div class="r" style="left:303px;top:273px;width:5px;height:24px;background:#EE82EE;"></div>
<div class="r" style="left:310px;top:274px;width:5px;height:23px;background:#9AC0CD;"></div>
<div class="r" style="left:317px;top:286px;width:5px;height:11px;background:#EED5D2;"></div>
<div class="r" style="left:324px;top:284px;width:5px;height:13px;background:#EED5D2;"></div>
<div class="r" style="left:331px;top:287px;width:5px;height:10px;background:#CDB79E;"></div>
<div class="r" style="left:338px;top:288px;width:5px;height:9px;background:#EEC591;"></div>
<div class="r" style="left:345px;top:288px;width:5px;height:9px;background:#8B7355;"></div>
<div class="r" style="left:352px;top:278px;width:5px;height:19px;background:#8B7355;"></div>
<div class="r" style="left:359px;top:289px;width:5px;height:8px;background:#CDAA7D;"></div>
<div class="r" style="left:366px;top:284px;width:5px;height:13px;background:#EED5D2;"></div>
<div class="r" style="left:373px;top:288px;width:5px;height:9px;background:#B452CD;"></div>
<div class="r" style="left:380px;top:291px;width:5px;height:6px;background:#7A378B;"></div>
<div class="r" style="left:387px;top:290px;width:5px;height:7px;background:#CDB79E;"></div>
<div class="r" style="left:394px;top:287px;width:5px;height:10px;background:#CDB79E;"></div>
<div class="r" style="left:401px;top:293px;width:5px;height:4px;background:#CDB79E;"></div>
<div class="r" style="left:408px;top:275px;width:5px;height:22px;background:#9ACD32;"></div>
<div class="r" style="left:415px;top:279px;width:5px;height:18px;background:#CDB79E;"></div>
<div class="r" style="left:422px;top:292px;width:5px;height:5px;background:#7A67EE;"></div>
<div class="r" style="left:429px;top:281px;width:5px;height:16px;background:#FFD700;"></div>
<div class="r" style="left:436px;top:285px;width:5px;height:12px;background:#FFB6C1;"></div>
<div class="r" style="left:443px;top:291px;width:5px;height:6px;background:#CD9B1D;"></div>
<div class="r" style="left:450px;top:274px;width:5px;height:23px;background:#B4EEB4;"></div>
<div class="r" style="left:457px;top:280px;width:5px;height:17px;background:#D9D9D9;"></div>
<div class="r" style="left:464px;top:270px;width:5px;height:27px;background:#3A5FCD;"></div>
<div class="r" style="left:471px;top:272px;width:5px;height:25px;background:#1E90FF;"></div>
<div class="r" style="left:478px;top:286px;width:5px;height:11px;background:#CDB79E;"></div>
<div class="r" style="left:485px;top:282px;width:5px;height:15px;background:#CDB79E;"></div>
<div class="r" style="left:492px;top:290px;width:5px;height:7px;background:#FFD39B;"></div>
<div class="r" style="left:499px;top:285px;width:5px;height:12px;background:#A6A6A6;"></div>
<div class="r" style="left:506px;top:274px;width:5px;height:23px;background:#008B45;"></div>
<div class="r" style="left:513px;top:285px;width:5px;height:12px;background:#EED5D2;"></div>
<div class="r" style="left:520px;top:285px;width:5px;height:12px;background:#EED5D2;"></div>
<div class="r" style="left:527px;top:292px;width:5px;height:5px;background:#FF00FF;"></div>
<div class="r" style="left:156px;top:298px;width:793px;height:2px;background:#000080;"></div>
<div class="r" style="left:156px;top:337px;width:176px;height:8px;background:#77e8c8;"></div>
<div class="r" style="left:332px;top:338px;width:617px;height:7px;background:#77e8c8;"></div>
<div class="r" style="left:156px;top:345px;width:176px;height:2px;background:#2a0a30;"></div>
<div class="r" style="left:332px;top:345px;width:617px;height:2px;background:#2a1060;"></div>
<div class="t" style="left:-224px;width:800px;text-align:center;top:444.0px;font-size:13px;color:#0c0c78;transform-origin:0 12.0px;">A</div>
<div class="t" style="left:-180px;width:800px;text-align:center;top:444.0px;font-size:13px;color:#0c0c78;transform-origin:0 12.0px;">G</div>
<div class="t" style="left:-136px;width:800px;text-align:center;top:444.0px;font-size:13px;color:#0c0c78;transform-origin:0 12.0px;">G</div>
<div class="t" style="left:-92px;width:800px;text-align:center;top:444.0px;font-size:13px;color:#0c0c78;transform-origin:0 12.0px;">G</div>
<div class="t" style="left:-48px;width:800px;text-align:center;top:444.0px;font-size:13px;color:#0c0c78;transform-origin:0 12.0px;">T</div>
<div class="t" style="left:-4px;width:800px;text-align:center;top:444.0px;font-size:13px;color:#0c0c78;transform-origin:0 12.0px;">C</div>
<div class="t" style="left:40px;width:800px;text-align:center;top:444.0px;font-size:13px;color:#0c0c78;transform-origin:0 12.0px;">A</div>
<div class="t" style="left:84px;width:800px;text-align:center;top:444.0px;font-size:13px;color:#0c0c78;transform-origin:0 12.0px;">T</div>
<div class="t" style="left:128px;width:800px;text-align:center;top:444.0px;font-size:13px;color:#0c0c78;transform-origin:0 12.0px;">G</div>
<div class="t" style="left:172px;width:800px;text-align:center;top:444.0px;font-size:13px;color:#0c0c78;transform-origin:0 12.0px;">A</div>
<div class="t" style="left:216px;width:800px;text-align:center;top:444.0px;font-size:13px;color:#0c0c78;transform-origin:0 12.0px;">A</div>
<div class="t" style="left:260px;width:800px;text-align:center;top:444.0px;font-size:13px;color:#0c0c78;transform-origin:0 12.0px;">A</div>
<div class="t" style="left:304px;width:800px;text-align:center;top:444.0px;font-size:13px;color:#0c0c78;transform-origin:0 12.0px;">G</div>
<div class="t" style="left:348px;width:800px;text-align:center;top:444.0px;font-size:13px;color:#0c0c78;transform-origin:0 12.0px;">T</div>
<div class="t" style="left:392px;width:800px;text-align:center;top:444.0px;font-size:13px;color:#0c0c78;transform-origin:0 12.0px;">T</div>
<div class="t" style="left:436px;width:800px;text-align:center;top:444.0px;font-size:13px;color:#0c0c78;transform-origin:0 12.0px;">T</div>
<div class="t" style="left:480px;width:800px;text-align:center;top:444.0px;font-size:13px;color:#0c0c78;transform-origin:0 12.0px;">G</div>
<div class="t" style="left:524px;width:800px;text-align:center;top:444.0px;font-size:13px;color:#0c0c78;transform-origin:0 12.0px;">A</div>
<div class="t" style="left:-224px;width:800px;text-align:center;top:459.0px;font-size:13px;color:#0c0c78;transform-origin:0 12.0px;">A</div>
<div class="t" style="left:-180px;width:800px;text-align:center;top:459.0px;font-size:13px;color:#0c0c78;transform-origin:0 12.0px;">G</div>
<div class="t" style="left:-136px;width:800px;text-align:center;top:459.0px;font-size:13px;color:#0c0c78;transform-origin:0 12.0px;">G</div>
<div class="t" style="left:-92px;width:800px;text-align:center;top:459.0px;font-size:13px;color:#0c0c78;transform-origin:0 12.0px;">G</div>
<div class="t" style="left:-48px;width:800px;text-align:center;top:459.0px;font-size:13px;color:#0c0c78;transform-origin:0 12.0px;">T</div>
<div class="t" style="left:-4px;width:800px;text-align:center;top:459.0px;font-size:13px;color:#0c0c78;transform-origin:0 12.0px;">C</div>
<div class="t" style="left:40px;width:800px;text-align:center;top:459.0px;font-size:13px;color:#0c0c78;transform-origin:0 12.0px;">A</div>
<div class="t" style="left:84px;width:800px;text-align:center;top:459.0px;font-size:13px;color:#0c0c78;transform-origin:0 12.0px;">T</div>
<div class="t" style="left:128px;width:800px;text-align:center;top:459.0px;font-size:13px;color:#0c0c78;transform-origin:0 12.0px;">G</div>
<div class="t" style="left:172px;width:800px;text-align:center;top:459.0px;font-size:13px;color:#0c0c78;transform-origin:0 12.0px;">A</div>
<div class="t" style="left:216px;width:800px;text-align:center;top:459.0px;font-size:13px;color:#0c0c78;transform-origin:0 12.0px;">A</div>
<div class="t" style="left:260px;width:800px;text-align:center;top:459.0px;font-size:13px;color:#0c0c78;transform-origin:0 12.0px;">A</div>
<div class="t" style="left:304px;width:800px;text-align:center;top:459.0px;font-size:13px;color:#0c0c78;transform-origin:0 12.0px;">G</div>
<div class="t" style="left:348px;width:800px;text-align:center;top:459.0px;font-size:13px;color:#0c0c78;transform-origin:0 12.0px;">T</div>
<div class="t" style="left:392px;width:800px;text-align:center;top:459.0px;font-size:13px;color:#0c0c78;transform-origin:0 12.0px;">T</div>
<div class="t" style="left:436px;width:800px;text-align:center;top:459.0px;font-size:13px;color:#0c0c78;transform-origin:0 12.0px;">T</div>
<div class="t" style="left:480px;width:800px;text-align:center;top:459.0px;font-size:13px;color:#0c0c78;transform-origin:0 12.0px;">G</div>
<div class="t" style="left:524px;width:800px;text-align:center;top:459.0px;font-size:13px;color:#0c0c78;transform-origin:0 12.0px;">A</div>
<div class="t" style="left:-224px;width:800px;text-align:center;top:474.0px;font-size:13px;color:#8c8cb4;transform-origin:0 12.0px;">T</div>
<div class="t" style="left:-180px;width:800px;text-align:center;top:474.0px;font-size:13px;color:#0c0c78;transform-origin:0 12.0px;">G</div>
<div class="t" style="left:-136px;width:800px;text-align:center;top:474.0px;font-size:13px;color:#0c0c78;transform-origin:0 12.0px;">G</div>
<div class="t" style="left:-92px;width:800px;text-align:center;top:474.0px;font-size:13px;color:#8c8cb4;transform-origin:0 12.0px;">A</div>
<div class="t" style="left:-48px;width:800px;text-align:center;top:474.0px;font-size:13px;color:#0c0c78;transform-origin:0 12.0px;">T</div>
<div class="t" style="left:-4px;width:800px;text-align:center;top:474.0px;font-size:13px;color:#0c0c78;transform-origin:0 12.0px;">C</div>
<div class="t" style="left:40px;width:800px;text-align:center;top:474.0px;font-size:13px;color:#0c0c78;transform-origin:0 12.0px;">A</div>
<div class="t" style="left:84px;width:800px;text-align:center;top:474.0px;font-size:13px;color:#0c0c78;transform-origin:0 12.0px;">T</div>
<div class="t" style="left:128px;width:800px;text-align:center;top:474.0px;font-size:13px;color:#8c8cb4;transform-origin:0 12.0px;">A</div>
<div class="t" style="left:172px;width:800px;text-align:center;top:474.0px;font-size:13px;color:#0c0c78;transform-origin:0 12.0px;">A</div>
<div class="t" style="left:216px;width:800px;text-align:center;top:474.0px;font-size:13px;color:#0c0c78;transform-origin:0 12.0px;">A</div>
<div class="r" style="left:656.5px;top:481px;width:6px;height:1px;background:#9090b8;"></div>
<div class="r" style="left:656.5px;top:484px;width:6px;height:1px;background:#9090b8;"></div>
<div class="r" style="left:700.5px;top:481px;width:6px;height:1px;background:#9090b8;"></div>
<div class="r" style="left:700.5px;top:484px;width:6px;height:1px;background:#9090b8;"></div>
<div class="r" style="left:744.5px;top:481px;width:6px;height:1px;background:#9090b8;"></div>
<div class="r" style="left:744.5px;top:484px;width:6px;height:1px;background:#9090b8;"></div>
<div class="r" style="left:788.5px;top:481px;width:6px;height:1px;background:#9090b8;"></div>
<div class="r" style="left:788.5px;top:484px;width:6px;height:1px;background:#9090b8;"></div>
<div class="r" style="left:832.5px;top:481px;width:6px;height:1px;background:#9090b8;"></div>
<div class="r" style="left:832.5px;top:484px;width:6px;height:1px;background:#9090b8;"></div>
<div class="r" style="left:876.5px;top:481px;width:6px;height:1px;background:#9090b8;"></div>
<div class="r" style="left:876.5px;top:484px;width:6px;height:1px;background:#9090b8;"></div>
<div class="r" style="left:920.5px;top:481px;width:6px;height:1px;background:#9090b8;"></div>
<div class="r" style="left:920.5px;top:484px;width:6px;height:1px;background:#9090b8;"></div>
<div class="r" style="left:174px;top:497px;width:4px;height:1px;background:#9090b8;"></div>
<div class="t" style="left:-180px;width:800px;text-align:center;top:489.0px;font-size:13px;color:#8c8cb4;transform-origin:0 12.0px;">A</div>
<div class="t" style="left:-136px;width:800px;text-align:center;top:489.0px;font-size:13px;color:#0c0c78;transform-origin:0 12.0px;">G</div>
<div class="t" style="left:-92px;width:800px;text-align:center;top:489.0px;font-size:13px;color:#0c0c78;transform-origin:0 12.0px;">G</div>
<div class="t" style="left:-48px;width:800px;text-align:center;top:489.0px;font-size:13px;color:#0c0c78;transform-origin:0 12.0px;">T</div>
<div class="t" style="left:-4px;width:800px;text-align:center;top:489.0px;font-size:13px;color:#0c0c78;transform-origin:0 12.0px;">C</div>
<div class="t" style="left:40px;width:800px;text-align:center;top:489.0px;font-size:13px;color:#8c8cb4;transform-origin:0 12.0px;">C</div>
<div class="t" style="left:84px;width:800px;text-align:center;top:489.0px;font-size:13px;color:#0c0c78;transform-origin:0 12.0px;">T</div>
<div class="t" style="left:128px;width:800px;text-align:center;top:489.0px;font-size:13px;color:#0c0c78;transform-origin:0 12.0px;">G</div>
<div class="t" style="left:172px;width:800px;text-align:center;top:489.0px;font-size:13px;color:#0c0c78;transform-origin:0 12.0px;">A</div>
<div class="t" style="left:216px;width:800px;text-align:center;top:489.0px;font-size:13px;color:#8c8cb4;transform-origin:0 12.0px;">C</div>
<div class="t" style="left:260px;width:800px;text-align:center;top:489.0px;font-size:13px;color:#0c0c78;transform-origin:0 12.0px;">A</div>
<div class="t" style="left:304px;width:800px;text-align:center;top:489.0px;font-size:13px;color:#0c0c78;transform-origin:0 12.0px;">G</div>
<div class="t" style="left:348px;width:800px;text-align:center;top:489.0px;font-size:13px;color:#8c8cb4;transform-origin:0 12.0px;">C</div>
<div class="t" style="left:392px;width:800px;text-align:center;top:489.0px;font-size:13px;color:#0c0c78;transform-origin:0 12.0px;">T</div>
<div class="t" style="left:436px;width:800px;text-align:center;top:489.0px;font-size:13px;color:#8c8cb4;transform-origin:0 12.0px;">C</div>
<div class="t" style="left:480px;width:800px;text-align:center;top:489.0px;font-size:13px;color:#8c8cb4;transform-origin:0 12.0px;">A</div>
<div class="t" style="left:524px;width:800px;text-align:center;top:489.0px;font-size:13px;color:#0c0c78;transform-origin:0 12.0px;">A</div>
<div class="t" style="left:-224px;width:800px;text-align:center;top:504.0px;font-size:13px;color:#0c0c78;transform-origin:0 12.0px;">A</div>
<div class="t" style="left:-180px;width:800px;text-align:center;top:504.0px;font-size:13px;color:#0c0c78;transform-origin:0 12.0px;">G</div>
<div class="t" style="left:-136px;width:800px;text-align:center;top:504.0px;font-size:13px;color:#8c8cb4;transform-origin:0 12.0px;">A</div>
<div class="t" style="left:-92px;width:800px;text-align:center;top:504.0px;font-size:13px;color:#0c0c78;transform-origin:0 12.0px;">G</div>
<div class="t" style="left:-48px;width:800px;text-align:center;top:504.0px;font-size:13px;color:#0c0c78;transform-origin:0 12.0px;">T</div>
<div class="t" style="left:-4px;width:800px;text-align:center;top:504.0px;font-size:13px;color:#8c8cb4;transform-origin:0 12.0px;">G</div>
<div class="t" style="left:40px;width:800px;text-align:center;top:504.0px;font-size:13px;color:#8c8cb4;transform-origin:0 12.0px;">C</div>
<div class="t" style="left:84px;width:800px;text-align:center;top:504.0px;font-size:13px;color:#0c0c78;transform-origin:0 12.0px;">T</div>
<div class="t" style="left:128px;width:800px;text-align:center;top:504.0px;font-size:13px;color:#8c8cb4;transform-origin:0 12.0px;">T</div>
<div class="t" style="left:172px;width:800px;text-align:center;top:504.0px;font-size:13px;color:#8c8cb4;transform-origin:0 12.0px;">C</div>
<div class="t" style="left:216px;width:800px;text-align:center;top:504.0px;font-size:13px;color:#0c0c78;transform-origin:0 12.0px;">A</div>
<div class="t" style="left:260px;width:800px;text-align:center;top:504.0px;font-size:13px;color:#0c0c78;transform-origin:0 12.0px;">A</div>
<div class="t" style="left:304px;width:800px;text-align:center;top:504.0px;font-size:13px;color:#0c0c78;transform-origin:0 12.0px;">G</div>
<div class="t" style="left:348px;width:800px;text-align:center;top:504.0px;font-size:13px;color:#0c0c78;transform-origin:0 12.0px;">T</div>
<div class="t" style="left:392px;width:800px;text-align:center;top:504.0px;font-size:13px;color:#8c8cb4;transform-origin:0 12.0px;">G</div>
<div class="t" style="left:436px;width:800px;text-align:center;top:504.0px;font-size:13px;color:#8c8cb4;transform-origin:0 12.0px;">C</div>
<div class="t" style="left:480px;width:800px;text-align:center;top:504.0px;font-size:13px;color:#0c0c78;transform-origin:0 12.0px;">G</div>
<div class="r" style="left:922px;top:512px;width:4px;height:1px;background:#9090b8;"></div>
<div class="t" style="left:240px;width:800px;text-align:center;top:430.0px;font-size:12px;color:#f08c00;transform-origin:0 11.0px;">6</div>
<svg class="r" style="left:0;top:370px" width="950" height="40" viewBox="0 370 950 40"><path d="M159.5,390.8 L163,389.3 L190,389.3 L192.5,390.8 L190,392.3 L163,392.3 Z" fill="none" stroke="#a8a010" stroke-width="1.2"/><rect x="159" y="389.5" width="5" height="2.6" fill="#a8a010"/><path d="M157,395.6 C162,395.4 165,394 169,393.8 C172,393.6 173,394.3 174.5,394.3 C176,394.3 177,393.6 180,393.8 C184,394 187,395.4 191,395.6" fill="none" stroke="#ff1010" stroke-width="1.2"/><line x1="157" y1="396.5" x2="189" y2="396.5" stroke="#b0ffb0" stroke-width="0.6"/><rect x="170" y="396" width="6" height="2" fill="#10e010"/><line x1="204" y1="389.5" x2="240" y2="389.5" stroke="#8080ff" stroke-width="0.9"/><rect x="206" y="388.8" width="5" height="1.4" fill="#2020ff"/><rect x="233" y="388.8" width="7" height="1.4" fill="#2020ff"/><path d="M203,390.4 Q220,391.4 237,390.6" fill="none" stroke="#ff7070" stroke-width="0.9"/><rect x="266.6" y="385.6" width="13" height="1.8" fill="#c8c8ff"/><line x1="251.6" y1="385.4" x2="281.6" y2="385.4" stroke="#5050ff" stroke-width="0.8"/><line x1="251.6" y1="387.4" x2="278.6" y2="387.4" stroke="#7070ff" stroke-width="0.7"/><path d="M247.6,386.3 L253.1,385 L253.1,387.8 Z" fill="#0000ff"/><rect x="256.6" y="384.9" width="4" height="1" fill="#3030ff"/><rect x="274.6" y="384.9" width="6" height="1" fill="#3030ff"/><rect x="279.0" y="386.8" width="5" height="1.4" fill="#0000ff"/><rect x="310.6" y="385.6" width="13" height="1.8" fill="#c8c8ff"/><line x1="295.6" y1="385.4" x2="325.6" y2="385.4" stroke="#5050ff" stroke-width="0.8"/><line x1="295.6" y1="387.4" x2="322.6" y2="387.4" stroke="#7070ff" stroke-width="0.7"/><path d="M291.6,386.3 L297.1,385 L297.1,387.8 Z" fill="#0000ff"/><rect x="300.6" y="384.9" width="4" height="1" fill="#3030ff"/><rect x="318.6" y="384.9" width="6" height="1" fill="#3030ff"/><rect x="323.0" y="386.8" width="5" height="1.4" fill="#0000ff"/><line x1="334" y1="386.5" x2="366" y2="386.5" stroke="#a0f0a0" stroke-width="0.7"/><rect x="347" y="385.6" width="6" height="2.4" fill="#10e010"/><line x1="380" y1="387.5" x2="413" y2="387.5" stroke="#c8c080" stroke-width="0.9"/><rect x="380" y="386.9" width="7" height="1.3" fill="#a8a010"/><line x1="555" y1="389.5" x2="588" y2="389.5" stroke="#ff7070" stroke-width="0.8"/><path d="M721.5,381.6 C716,380.3 711,380 705,380 C692,380 687.5,382 687.5,384 C687.5,386.3 693,388 705,388 L723.5,388" fill="none" stroke="#0000ff" stroke-width="1.3"/><path d="M687,384 C687,381.8 691,380.6 697,380.4 C691.5,381.6 690.5,386.4 697,387.6 C691,387.3 687,386.2 687,384 Z" fill="#0000ff"/><line x1="707" y1="385.2" x2="724" y2="385.2" stroke="#0000ff" stroke-width="1"/><rect x="720" y="384.7" width="4" height="3.6" fill="#0000ff"/><line x1="730" y1="389.5" x2="762" y2="389.5" stroke="#b0f0b0" stroke-width="0.7"/><rect x="743" y="388.7" width="6" height="1.7" fill="#10e010"/><line x1="820" y1="389.5" x2="853" y2="389.5" stroke="#d0c890" stroke-width="0.9"/><rect x="820" y="389" width="6" height="1.1" fill="#b8b040"/><rect x="846" y="389" width="6" height="1.1" fill="#c8c060"/></svg>
<div class="r" style="left:156px;top:579px;width:617px;height:15px;background:#000;"></div>
</div></body></html>
